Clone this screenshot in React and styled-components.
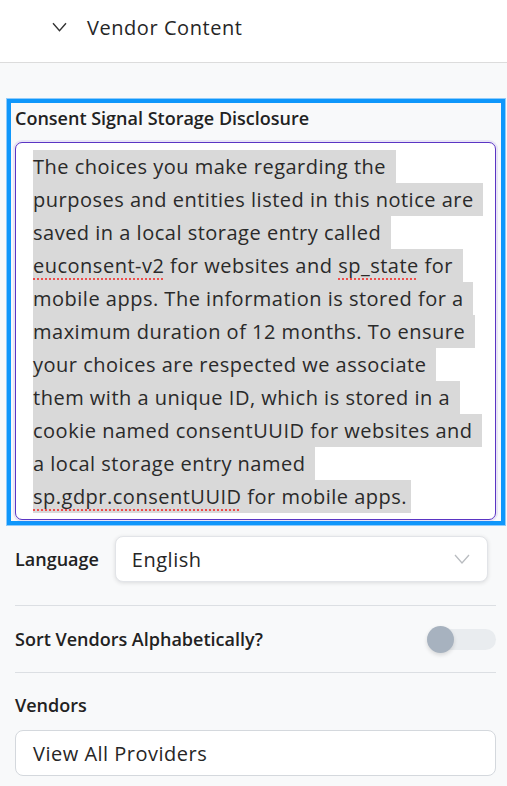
import React from "react";
import styled, { createGlobalStyle } from "styled-components";

const Global = createGlobalStyle`
  html, body { margin: 0; padding: 0; background: #f8f9fa; }
  body { font-family: "Open Sans", "Noto Sans", sans-serif; color: #2b2b2b; }
  * { box-sizing: border-box; }
`;

const Page = styled.div`
  width: 507px;
  min-height: 786px;
  background: #f8f9fa;
`;

const Header = styled.div`
  height: 63px;
  background: #ffffff;
  border-bottom: 1px solid #dcdcdc;
  display: flex;
  align-items: flex-start;
  padding: 14px 0 0 52px;
`;

const HeaderChevron = styled.svg`
  width: 15px;
  height: 10px;
  margin-top: 8px;
  margin-right: 20px;
  flex: none;
`;

const HeaderTitle = styled.div`
  font-size: 20px;
  letter-spacing: 0.55px;
  line-height: 27px;
  color: #262626;
`;

const Content = styled.div`
  padding: 36px 11px 8px 15px;
  display: flex;
  flex-direction: column;
`;

const Highlight = styled.div`
  margin: 0 -9px 0 -8px;
  border: 4px solid #0f97fb;
  outline: 1px solid #8fcbfb;
  padding: 3px 5px 1px 4px;
  display: flex;
  flex-direction: column;
`;

const FieldLabel = styled.div`
  font-size: 18px;
  line-height: 24px;
  font-weight: 600;
  color: #222;
  white-space: nowrap;
  margin-bottom: ${(p) => p.$gap || 0}px;
`;

const TextBox = styled.div`
  background: #fff;
  border: 1px solid #5b35c4;
  border-radius: 7px;
  box-shadow: 0 0 0 2px rgba(120, 90, 220, 0.12);
  padding: 7px 8px 6px 17px;
  font-size: 20px;
  letter-spacing: 0.5px;
  line-height: 33px;
  color: #2a2a2a;
`;

const Line = styled.div`
  white-space: pre;
  height: 33px;
`;

const Sel = styled.span`
  background: #d9d9d9;
  padding: 3px 4px 3px 0;
  box-decoration-break: clone;
`;

const Misspelled = styled.span`
  text-decoration: underline dotted #ef4e4b;
  text-decoration-thickness: 2px;
  text-underline-offset: 5px;
`;

const LanguageRow = styled.div`
  display: flex;
  align-items: center;
  gap: 16px;
  margin-top: 11px;
  padding-right: 8px;
`;

const Select = styled.div`
  flex: 1;
  height: 46px;
  background: #fff;
  border: 1px solid #e2e4e8;
  border-radius: 8px;
  box-shadow: 0 1px 4px rgba(0, 0, 0, 0.12);
  display: flex;
  align-items: center;
  justify-content: space-between;
  padding: 0 17px 0 16px;
  font-size: 20px;
  letter-spacing: 0.5px;
  color: #262626;
`;

const SelectChevron = styled.svg`
  width: 16px;
  height: 10px;
`;

const Divider = styled.div`
  height: 1px;
  background: #dcdfe3;
  margin-top: ${(p) => p.$top || 0}px;
`;

const ToggleRow = styled.div`
  height: 66px;
  display: flex;
  align-items: center;
  justify-content: space-between;
`;

const Track = styled.div`
  position: relative;
  width: 68px;
  height: 21px;
  border-radius: 11px;
  background: #e9ecef;
`;

const Knob = styled.div`
  position: absolute;
  left: -1px;
  top: -3px;
  width: 27px;
  height: 27px;
  border-radius: 50%;
  background: #a7b2bf;
  box-shadow: 0 2px 4px rgba(0, 0, 0, 0.14);
`;

const VendorsBlock = styled.div`
  padding-top: 20px;
  display: flex;
  flex-direction: column;
`;

const Input = styled.div`
  height: 46px;
  background: #fff;
  border: 1px solid #d4d8dd;
  border-radius: 8px;
  display: flex;
  align-items: center;
  padding-left: 17px;
  font-size: 20px;
  letter-spacing: 0.5px;
  color: #262626;
`;

const lines = [
  ["The choices you make regarding the "],
  ["purposes and entities listed in this notice are "],
  ["saved in a local storage entry called "],
  [{ w: "euconsent-v2" }, " for websites and ", { w: "sp_state" }, " for "],
  ["mobile apps. The information is stored for a "],
  ["maximum duration of 12 months. To ensure "],
  ["your choices are respected we associate "],
  ["them with a unique ID, which is stored in a "],
  ["cookie named consentUUID for websites and "],
  ["a local storage entry named "],
  [{ w: "sp.gdpr.consentUUID" }, " for mobile apps."],
];

export default function App() {
  return (
    <Page>
      <Global />
      <Header>
        <HeaderChevron viewBox="0 0 15 10" fill="none">
          <path d="M1 1.2 L7.5 8.6 L14 1.2" stroke="#333" strokeWidth="1.4" />
        </HeaderChevron>
        <HeaderTitle>Vendor Content</HeaderTitle>
      </Header>
      <Content>
        <Highlight>
          <FieldLabel $gap={12}>Consent Signal Storage Disclosure</FieldLabel>
          <TextBox>
            {lines.map((parts, i) => (
              <Line key={i}>
                <Sel>
                  {parts.map((p, j) =>
                    typeof p === "string" ? (
                      <React.Fragment key={j}>{p}</React.Fragment>
                    ) : (
                      <Misspelled key={j}>{p.w}</Misspelled>
                    )
                  )}
                </Sel>
              </Line>
            ))}
          </TextBox>
        </Highlight>
        <LanguageRow>
          <FieldLabel>Language</FieldLabel>
          <Select>
            <span>English</span>
            <SelectChevron viewBox="0 0 16 10" fill="none">
              <path d="M1 1 L8 9 L15 1" stroke="#b9bcc0" strokeWidth="1.3" />
            </SelectChevron>
          </Select>
        </LanguageRow>
        <Divider $top={23} />
        <ToggleRow>
          <FieldLabel>Sort Vendors Alphabetically?</FieldLabel>
          <Track>
            <Knob />
          </Track>
        </ToggleRow>
        <Divider />
        <VendorsBlock>
          <FieldLabel $gap={13}>Vendors</FieldLabel>
          <Input>View All Providers</Input>
        </VendorsBlock>
      </Content>
    </Page>
  );
}
